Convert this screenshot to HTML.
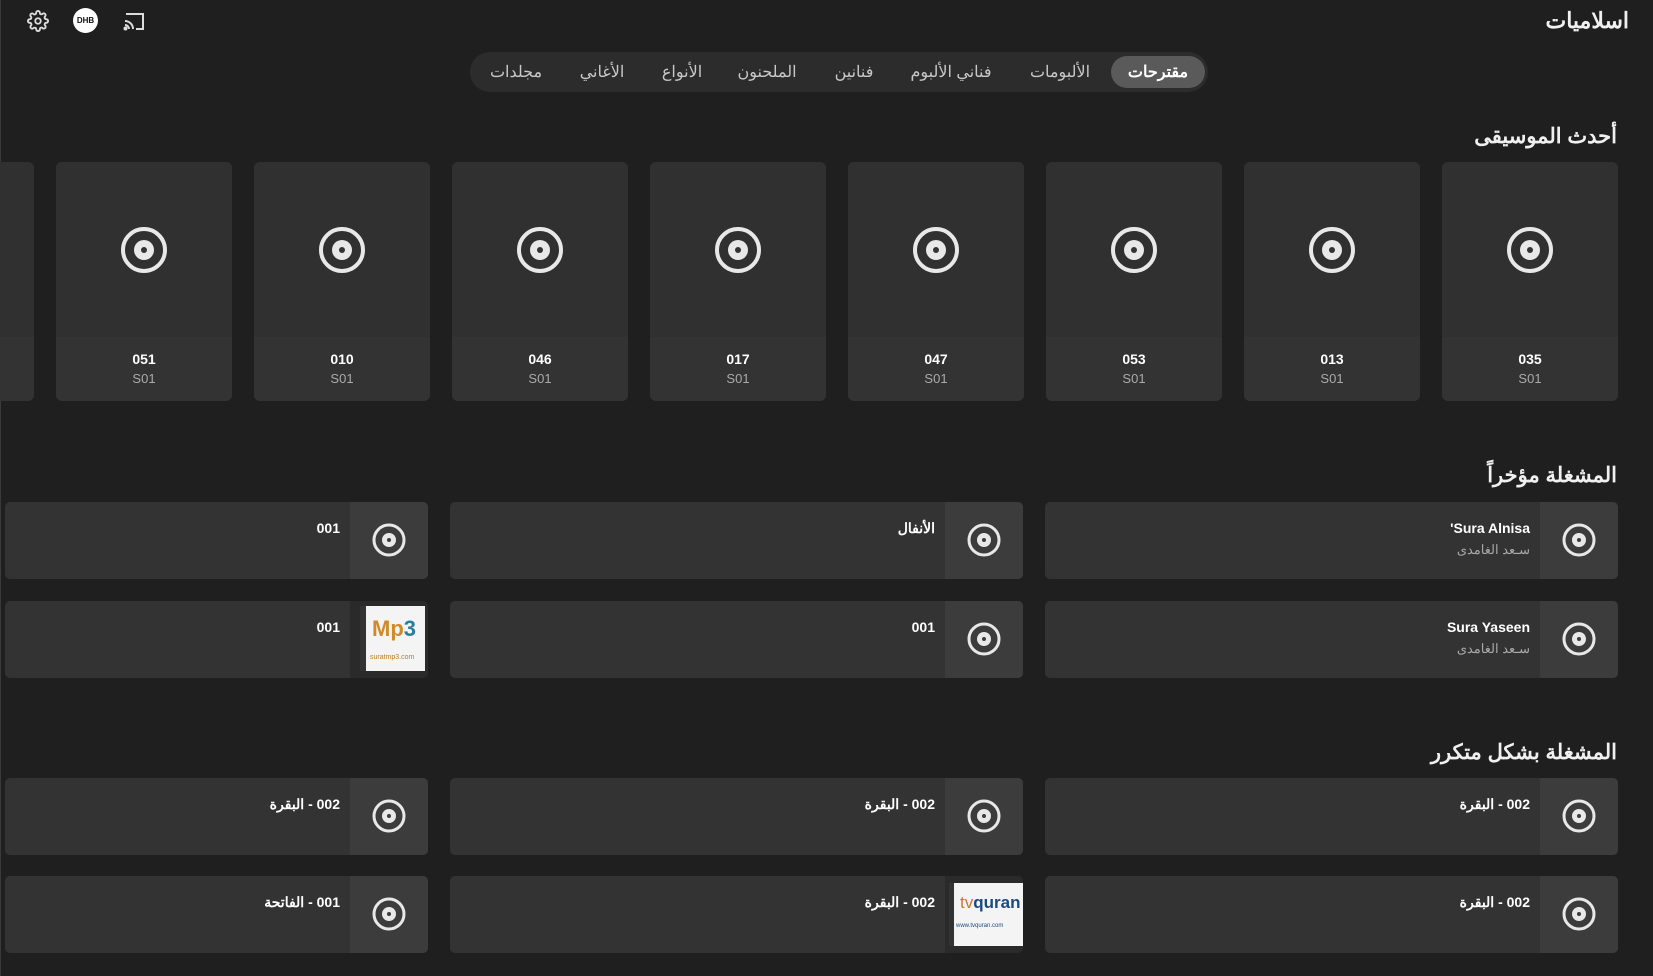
<!DOCTYPE html>
<html><head><meta charset="utf-8"><style>
*{margin:0;padding:0;box-sizing:border-box}
body{width:1653px;height:976px;background:#1f1f1f;position:relative;overflow:hidden;font-family:"Liberation Sans","Noto Sans CJK SC",sans-serif;color:#fff;border-left:1px solid #3a3a3a}
.a{position:absolute}
.h{position:absolute;right:36px;font-size:21px;font-weight:bold;direction:rtl;color:#f0f0f0}
.tab{position:absolute;top:62px;font-size:16px;color:#c8c8c8;transform:translateX(-50%);white-space:nowrap;direction:rtl}
.card{position:absolute;top:162px;width:176px;height:239px;background:#333;border-radius:6px;overflow:hidden}
.card .art{position:absolute;left:0;top:0;width:100%;height:175px;background:#303030}
.card svg{position:absolute;left:63px;top:63px}
.card .t{position:absolute;top:189px;width:100%;text-align:center;font-size:14px;font-weight:bold}
.card .s{position:absolute;top:209px;width:100%;text-align:center;font-size:13px;color:#aaa}
.row{position:absolute;height:77px;background:#333;border-radius:5px;overflow:hidden}
.row .ic{position:absolute;right:0;top:0;width:78px;height:100%;background:#3c3c3c}
.row .ic svg{position:absolute;left:21px;top:20px}
.row .t{position:absolute;right:88px;top:18px;font-size:14px;font-weight:bold;direction:rtl;font-family:"Liberation Sans","Noto Sans CJK SC",sans-serif}
.row .s{position:absolute;right:88px;top:40px;font-size:13px;color:#aaa;direction:rtl}
</style></head><body>
<svg class="a" style="left:26px;top:10px" width="22" height="22" viewBox="0 0 24 24" fill="none" stroke="#ddd" stroke-width="2"><circle cx="12" cy="12" r="3"/><path d="M19.4 15a1.65 1.65 0 0 0 .33 1.82l.06.06a2 2 0 1 1-2.83 2.83l-.06-.06a1.65 1.65 0 0 0-1.82-.33 1.65 1.65 0 0 0-1 1.51V21a2 2 0 1 1-4 0v-.09A1.65 1.65 0 0 0 9 19.4a1.65 1.65 0 0 0-1.82.33l-.06.06a2 2 0 1 1-2.83-2.83l.06-.06A1.65 1.65 0 0 0 4.68 15a1.65 1.65 0 0 0-1.51-1H3a2 2 0 1 1 0-4h.09A1.65 1.65 0 0 0 4.6 9a1.65 1.65 0 0 0-.33-1.82l-.06-.06a2 2 0 1 1 2.83-2.83l.06.06A1.65 1.65 0 0 0 9 4.68 1.65 1.65 0 0 0 10 3.17V3a2 2 0 1 1 4 0v.09a1.65 1.65 0 0 0 1 1.51 1.65 1.65 0 0 0 1.82-.33l.06-.06a2 2 0 1 1 2.83 2.83l-.06.06A1.65 1.65 0 0 0 19.4 9a1.65 1.65 0 0 0 1.51 1H21a2 2 0 1 1 0 4h-.09a1.65 1.65 0 0 0-1.51 1z"/></svg>
<div class="a" style="left:72px;top:8px;width:25px;height:25px;border-radius:50%;background:#fff;color:#111;font-size:8px;font-weight:bold;text-align:center;line-height:25px">DHB</div>
<svg class="a" style="left:122px;top:11px" width="22" height="20" viewBox="0 0 22 20" fill="none" stroke="#ddd" stroke-width="2"><path d="M3 3h17v15h-7"/><path d="M2 10a8 8 0 0 1 8 8M2 14a4 4 0 0 1 4 4"/><circle cx="2.5" cy="17.5" r="1" fill="#ddd"/></svg>
<div class="h" style="top:8px;right:24px;font-size:22px">اسلاميات</div>

<div class="a" style="left:469px;top:52px;width:738px;height:40px;background:#2c2c2c;border-radius:20px"></div>
<div class="a" style="left:1110px;top:56px;width:94px;height:32px;background:#5a5a5a;border-radius:16px"></div>
<div class="tab" style="left:1157px;color:#fff;font-weight:bold">مقترحات</div>
<div class="tab" style="left:1059px">الألبومات</div>
<div class="tab" style="left:950px">فناني الألبوم</div>
<div class="tab" style="left:853px">فنانين</div>
<div class="tab" style="left:766px">الملحنون</div>
<div class="tab" style="left:681px">الأنواع</div>
<div class="tab" style="left:601px">الأغاني</div>
<div class="tab" style="left:515px">مجلدات</div>

<div class="h" style="top:124px">أحدث الموسيقى</div>
<div class="card" style="left:1441px"><div class="art"></div><svg width="50" height="50" viewBox="0 0 50 50"><circle cx="25" cy="25" r="21" fill="none" stroke="#e8e8e8" stroke-width="4"/><circle cx="25" cy="25" r="10" fill="#e8e8e8"/><circle cx="25" cy="25" r="3" fill="#333"/></svg><div class="t">035</div><div class="s">S01</div></div>
<div class="card" style="left:1243px"><div class="art"></div><svg width="50" height="50" viewBox="0 0 50 50"><circle cx="25" cy="25" r="21" fill="none" stroke="#e8e8e8" stroke-width="4"/><circle cx="25" cy="25" r="10" fill="#e8e8e8"/><circle cx="25" cy="25" r="3" fill="#333"/></svg><div class="t">013</div><div class="s">S01</div></div>
<div class="card" style="left:1045px"><div class="art"></div><svg width="50" height="50" viewBox="0 0 50 50"><circle cx="25" cy="25" r="21" fill="none" stroke="#e8e8e8" stroke-width="4"/><circle cx="25" cy="25" r="10" fill="#e8e8e8"/><circle cx="25" cy="25" r="3" fill="#333"/></svg><div class="t">053</div><div class="s">S01</div></div>
<div class="card" style="left:847px"><div class="art"></div><svg width="50" height="50" viewBox="0 0 50 50"><circle cx="25" cy="25" r="21" fill="none" stroke="#e8e8e8" stroke-width="4"/><circle cx="25" cy="25" r="10" fill="#e8e8e8"/><circle cx="25" cy="25" r="3" fill="#333"/></svg><div class="t">047</div><div class="s">S01</div></div>
<div class="card" style="left:649px"><div class="art"></div><svg width="50" height="50" viewBox="0 0 50 50"><circle cx="25" cy="25" r="21" fill="none" stroke="#e8e8e8" stroke-width="4"/><circle cx="25" cy="25" r="10" fill="#e8e8e8"/><circle cx="25" cy="25" r="3" fill="#333"/></svg><div class="t">017</div><div class="s">S01</div></div>
<div class="card" style="left:451px"><div class="art"></div><svg width="50" height="50" viewBox="0 0 50 50"><circle cx="25" cy="25" r="21" fill="none" stroke="#e8e8e8" stroke-width="4"/><circle cx="25" cy="25" r="10" fill="#e8e8e8"/><circle cx="25" cy="25" r="3" fill="#333"/></svg><div class="t">046</div><div class="s">S01</div></div>
<div class="card" style="left:253px"><div class="art"></div><svg width="50" height="50" viewBox="0 0 50 50"><circle cx="25" cy="25" r="21" fill="none" stroke="#e8e8e8" stroke-width="4"/><circle cx="25" cy="25" r="10" fill="#e8e8e8"/><circle cx="25" cy="25" r="3" fill="#333"/></svg><div class="t">010</div><div class="s">S01</div></div>
<div class="card" style="left:55px"><div class="art"></div><svg width="50" height="50" viewBox="0 0 50 50"><circle cx="25" cy="25" r="21" fill="none" stroke="#e8e8e8" stroke-width="4"/><circle cx="25" cy="25" r="10" fill="#e8e8e8"/><circle cx="25" cy="25" r="3" fill="#333"/></svg><div class="t">051</div><div class="s">S01</div></div>
<div class="card" style="left:-143px"><div class="art"></div></div>

<div class="h" style="top:463px">المشغلة مؤخراً</div>
<div class="row" style="left:1044px;top:502px;width:573px"><div class="ic"><svg width="36" height="36" viewBox="0 0 36 36"><circle cx="18" cy="18" r="15" fill="none" stroke="#e8e8e8" stroke-width="3"/><circle cx="18" cy="18" r="7" fill="#e8e8e8"/><circle cx="18" cy="18" r="2" fill="#3c3c3c"/></svg></div><div class="t" style="direction:ltr">'Sura Alnisa</div><div class="s">سـعد الغامدى</div></div>
<div class="row" style="left:449px;top:502px;width:573px"><div class="ic"><svg width="36" height="36" viewBox="0 0 36 36"><circle cx="18" cy="18" r="15" fill="none" stroke="#e8e8e8" stroke-width="3"/><circle cx="18" cy="18" r="7" fill="#e8e8e8"/><circle cx="18" cy="18" r="2" fill="#3c3c3c"/></svg></div><div class="t">الأنفال</div></div>
<div class="row" style="left:4px;top:502px;width:423px"><div class="ic"><svg width="36" height="36" viewBox="0 0 36 36"><circle cx="18" cy="18" r="15" fill="none" stroke="#e8e8e8" stroke-width="3"/><circle cx="18" cy="18" r="7" fill="#e8e8e8"/><circle cx="18" cy="18" r="2" fill="#3c3c3c"/></svg></div><div class="t">001</div></div>
<div class="row" style="left:1044px;top:601px;width:573px"><div class="ic"><svg width="36" height="36" viewBox="0 0 36 36"><circle cx="18" cy="18" r="15" fill="none" stroke="#e8e8e8" stroke-width="3"/><circle cx="18" cy="18" r="7" fill="#e8e8e8"/><circle cx="18" cy="18" r="2" fill="#3c3c3c"/></svg></div><div class="t" style="direction:ltr">Sura Yaseen</div><div class="s">سـعد الغامدى</div></div>
<div class="row" style="left:449px;top:601px;width:573px"><div class="ic"><svg width="36" height="36" viewBox="0 0 36 36"><circle cx="18" cy="18" r="15" fill="none" stroke="#e8e8e8" stroke-width="3"/><circle cx="18" cy="18" r="7" fill="#e8e8e8"/><circle cx="18" cy="18" r="2" fill="#3c3c3c"/></svg></div><div class="t">001</div></div>
<div class="row" style="left:4px;top:601px;width:423px"><div class="ic" style="background:#2a2a2a"><div class="a" style="left:10px;top:5px;width:65px;height:65px;background:#f4f4f4;border-left:6px solid #333"><div class="a" style="left:6px;top:10px;font-size:22px;color:#d08a2a;font-weight:bold">Mp<span style="color:#2a7fa0">3</span></div><div class="a" style="left:4px;top:48px;font-size:7px;color:#c07a20">suratmp3.com</div></div></div><div class="t">001</div></div>

<div class="h" style="top:740px">المشغلة بشكل متكرر</div>
<div class="row" style="left:1044px;top:778px;width:573px"><div class="ic"><svg width="36" height="36" viewBox="0 0 36 36"><circle cx="18" cy="18" r="15" fill="none" stroke="#e8e8e8" stroke-width="3"/><circle cx="18" cy="18" r="7" fill="#e8e8e8"/><circle cx="18" cy="18" r="2" fill="#3c3c3c"/></svg></div><div class="t">002 - البقرة</div></div>
<div class="row" style="left:449px;top:778px;width:573px"><div class="ic"><svg width="36" height="36" viewBox="0 0 36 36"><circle cx="18" cy="18" r="15" fill="none" stroke="#e8e8e8" stroke-width="3"/><circle cx="18" cy="18" r="7" fill="#e8e8e8"/><circle cx="18" cy="18" r="2" fill="#3c3c3c"/></svg></div><div class="t">002 - البقرة</div></div>
<div class="row" style="left:4px;top:778px;width:423px"><div class="ic"><svg width="36" height="36" viewBox="0 0 36 36"><circle cx="18" cy="18" r="15" fill="none" stroke="#e8e8e8" stroke-width="3"/><circle cx="18" cy="18" r="7" fill="#e8e8e8"/><circle cx="18" cy="18" r="2" fill="#3c3c3c"/></svg></div><div class="t">002 - البقرة</div></div>
<div class="row" style="left:1044px;top:876px;width:573px"><div class="ic"><svg width="36" height="36" viewBox="0 0 36 36"><circle cx="18" cy="18" r="15" fill="none" stroke="#e8e8e8" stroke-width="3"/><circle cx="18" cy="18" r="7" fill="#e8e8e8"/><circle cx="18" cy="18" r="2" fill="#3c3c3c"/></svg></div><div class="t">002 - البقرة</div></div>
<div class="row" style="left:449px;top:876px;width:573px"><div class="ic" style="background:#2a2a2a"><div class="a" style="left:4px;top:7px;width:74px;height:63px;background:#f4f4f4;border-left:5px solid #333"><div class="a" style="left:6px;top:10px;font-size:17px;color:#c87a2a">tv<span style="color:#1a4a80;font-weight:bold">quran</span></div><div class="a" style="left:2px;top:40px;font-size:6px;color:#1a4a80">www.tvquran.com</div></div></div><div class="t">002 - البقرة</div></div>
<div class="row" style="left:4px;top:876px;width:423px"><div class="ic"><svg width="36" height="36" viewBox="0 0 36 36"><circle cx="18" cy="18" r="15" fill="none" stroke="#e8e8e8" stroke-width="3"/><circle cx="18" cy="18" r="7" fill="#e8e8e8"/><circle cx="18" cy="18" r="2" fill="#3c3c3c"/></svg></div><div class="t">001 - الفاتحة</div></div>
</body></html>
